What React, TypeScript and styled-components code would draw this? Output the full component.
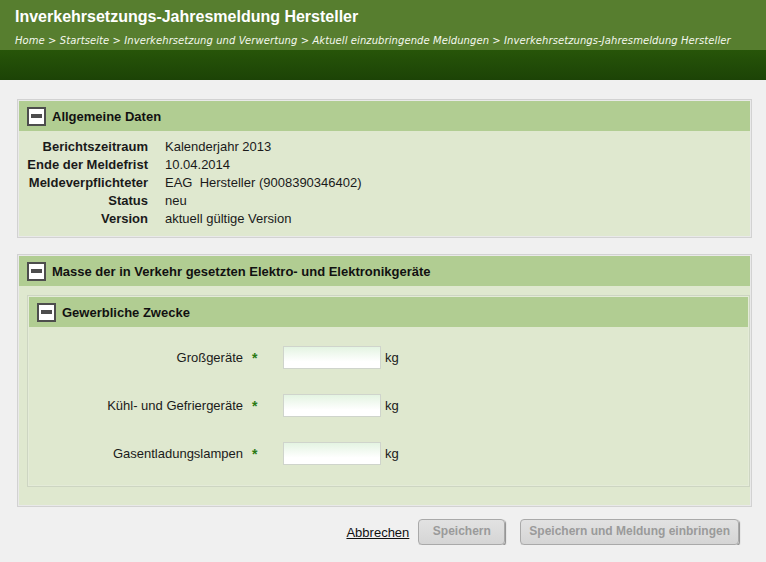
import React from "react";
import styled, { createGlobalStyle } from "styled-components";

const GlobalStyle = createGlobalStyle`
  body {
    margin: 0;
    background: #f0f0f0;
    font-family: "Liberation Sans", Arial, sans-serif;
    color: #1a1a1a;
  }
`;

const Header = styled.header`
  height: 50px;
  box-sizing: border-box;
  background: #577e2f;
  padding: 6px 15px 0;
  color: #fff;
`;

const Title = styled.h1`
  margin: 0;
  font-size: 16px;
  font-weight: 700;
  line-height: 22px;
`;

const Breadcrumb = styled.div`
  margin-top: 6px;
  font-family: "DejaVu Sans", Verdana, sans-serif;
  font-style: italic;
  font-size: 10px;
  line-height: 13px;
  letter-spacing: 0.08px;
  color: #f4f8ee;
`;

const Band = styled.div`
  height: 30px;
  background: linear-gradient(#275509, #1c4306);
`;

const Main = styled.main`
  padding: 19px 14px 0 17px;
`;

const Panel = styled.section<{ $nested?: boolean }>`
  border: 1px solid ${(p) => (p.$nested ? "#cdd5c2" : "#d2d2d2")};
  padding: 1px;
  background: ${(p) => (p.$nested ? "#e4ebd8" : "#e9e9e9")};
  & + & {
    margin-top: 16px;
  }
`;

const PanelHeader = styled.div`
  height: 30px;
  display: flex;
  align-items: center;
  gap: 6px;
  padding-left: 8px;
  background: #b1cd92;
  font-size: 13px;
  font-weight: 700;
  color: #111;
`;

const Toggle = styled.span`
  width: 19px;
  height: 19px;
  box-sizing: border-box;
  border: 2px solid #4d4d4d;
  background: #fff;
  display: flex;
  align-items: center;
  justify-content: center;
  &::after {
    content: "";
    width: 11px;
    height: 4px;
    background: #4d4d4d;
  }
`;

const PanelBody = styled.div<{ $pad: string }>`
  background: #dfe8cf;
  padding: ${(p) => p.$pad};
`;

const DataGrid = styled.dl`
  margin: 0;
  display: grid;
  grid-template-columns: 129px auto;
  column-gap: 17px;
  font-size: 13px;
  line-height: 18px;
`;

const DataLabel = styled.dt`
  font-weight: 700;
  text-align: right;
`;

const DataValue = styled.dd`
  margin: 0;
  white-space: pre;
`;

const FormGrid = styled.div`
  display: grid;
  grid-template-columns: 214px 40px 98px auto;
  row-gap: 25px;
  align-items: center;
  font-size: 13px;
`;

const FieldLabel = styled.label`
  text-align: right;
`;

const Required = styled.span`
  padding-left: 9px;
  color: #2a7a14;
  font-weight: 700;
  font-size: 14px;
`;

const Input = styled.input`
  width: 98px;
  height: 23px;
  box-sizing: border-box;
  border: 1px solid #cfd4cc;
  background: linear-gradient(#e4f4e2, #ffffff 70%);
  outline: none;
`;

const Unit = styled.span`
  margin-left: 4px;
`;

const Actions = styled.div`
  display: flex;
  justify-content: flex-end;
  align-items: center;
  padding: 12px 13px 0 0;
  gap: 9px;
`;

const CancelLink = styled.a`
  font-size: 13px;
  color: #111;
  text-decoration: underline;
  cursor: pointer;
`;

const Button = styled.button`
  height: 26px;
  min-width: 87px;
  padding: 0 8px 2px;
  border: 1px solid #a9a9a9;
  border-radius: 4px;
  background: linear-gradient(#e2e2e2, #d5d5d5);
  box-shadow: 1px 1px 1px #8c8c8c;
  font-family: "Liberation Sans", Arial, sans-serif;
  font-size: 12px;
  font-weight: 700;
  color: #9a9a9a;
  & + & {
    margin-left: 6px;
  }
`;

const general = [
  ["Berichtszeitraum", "Kalenderjahr 2013"],
  ["Ende der Meldefrist", "10.04.2014"],
  ["Meldeverpflichteter", "EAG  Hersteller (9008390346402)"],
  ["Status", "neu"],
  ["Version", "aktuell gültige Version"],
];

const fields = ["Großgeräte", "Kühl- und Gefriergeräte", "Gasentladungslampen"];

export default function App() {
  return (
    <>
      <GlobalStyle />
      <Header>
        <Title>Inverkehrsetzungs-Jahresmeldung Hersteller</Title>
        <Breadcrumb>
          Home &gt; Startseite &gt; Inverkehrsetzung und Verwertung &gt; Aktuell einzubringende Meldungen &gt;
          Inverkehrsetzungs-Jahresmeldung Hersteller
        </Breadcrumb>
      </Header>
      <Band />
      <Main>
        <Panel>
          <PanelHeader>
            <Toggle />
            Allgemeine Daten
          </PanelHeader>
          <PanelBody $pad="7px 0 8px 0">
            <DataGrid>
              {general.map(([label, value]) => (
                <React.Fragment key={label}>
                  <DataLabel>{label}</DataLabel>
                  <DataValue>{value}</DataValue>
                </React.Fragment>
              ))}
            </DataGrid>
          </PanelBody>
        </Panel>
        <Panel>
          <PanelHeader>
            <Toggle />
            Masse der in Verkehr gesetzten Elektro- und Elektronikgeräte
          </PanelHeader>
          <PanelBody $pad="9px 0 18px 8px">
            <Panel $nested>
              <PanelHeader>
                <Toggle />
                Gewerbliche Zwecke
              </PanelHeader>
              <PanelBody $pad="19px 0 20px 0">
                <FormGrid>
                  {fields.map((f) => (
                    <React.Fragment key={f}>
                      <FieldLabel>{f}</FieldLabel>
                      <Required>*</Required>
                      <Input />
                      <Unit>kg</Unit>
                    </React.Fragment>
                  ))}
                </FormGrid>
              </PanelBody>
            </Panel>
          </PanelBody>
        </Panel>
        <Actions>
          <CancelLink>Abbrechen</CancelLink>
          <Button>Speichern</Button>
          <Button>Speichern und Meldung einbringen</Button>
        </Actions>
      </Main>
    </>
  );
}
